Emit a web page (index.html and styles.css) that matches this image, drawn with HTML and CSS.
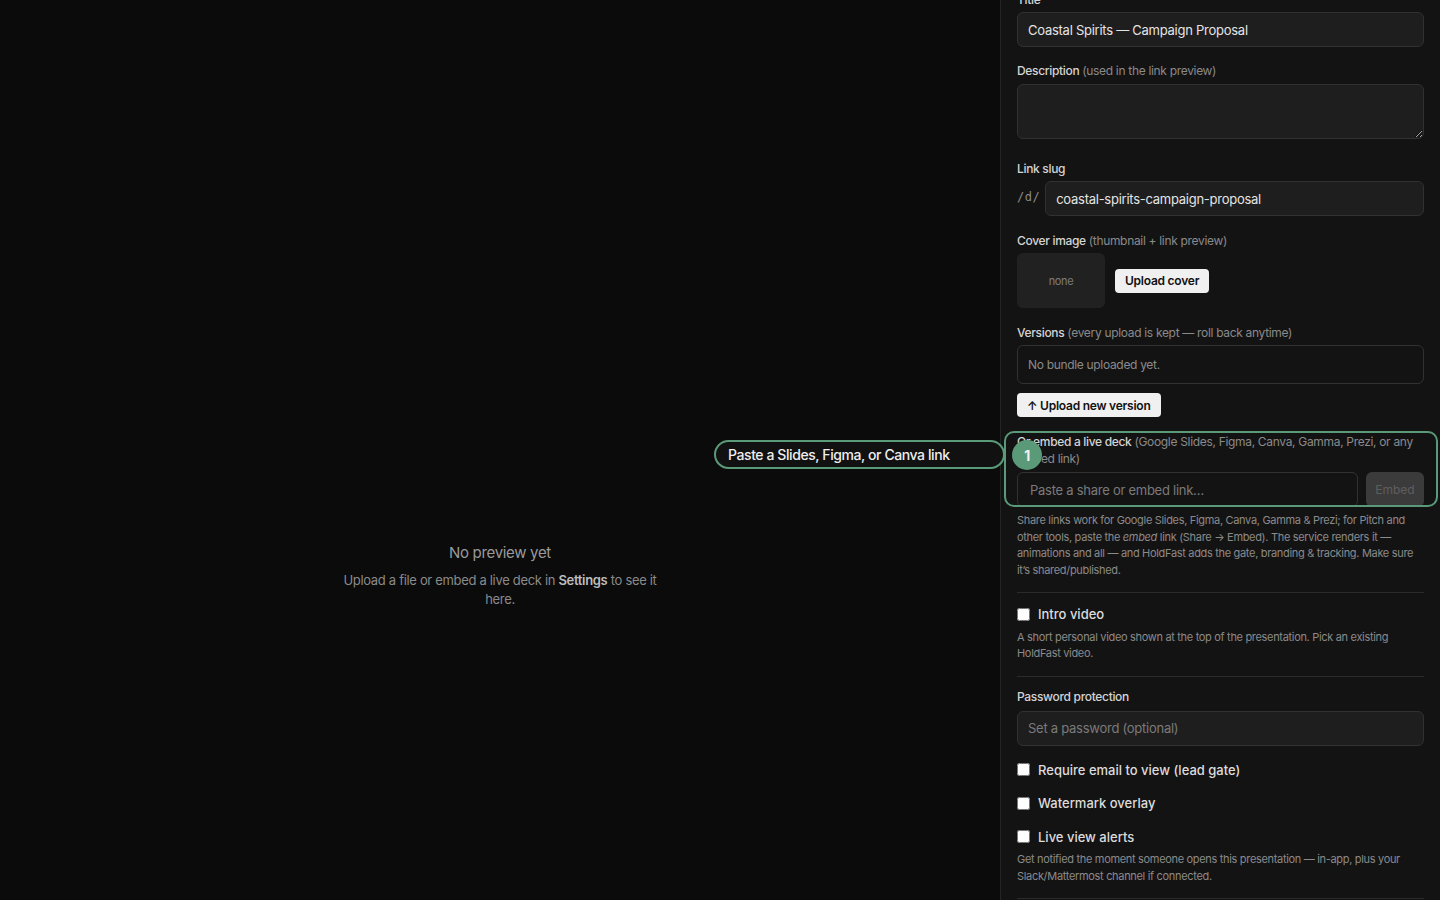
FILE: index.html
```html
<!DOCTYPE html>
<html>
  <head>
    <title>Presentation settings</title>
    <link rel="stylesheet" href="styles.css">
  </head>
  <body>
    <div class="app">
      <div class="preview">
        <div class="empty">
          <p class="empty-title">No preview yet</p>
          <p class="empty-text">Upload a file or embed a live deck in <b>Settings</b> to see it here.</p>
        </div>
      </div>

      <div class="settings js-settings">
        <div class="field">
          <label class="label">Title</label>
          <input class="input" type="text" value="Coastal Spirits — Campaign Proposal">
        </div>

        <div class="field field-wide">
          <label class="label">Description <span class="muted">(used in the link preview)</span></label>
          <textarea class="input textarea"></textarea>
        </div>

        <div class="field field-loose">
          <label class="label">Link slug</label>
          <div class="slug-row">
            <span class="slug-prefix">/d/</span>
            <input class="input" type="text" value="coastal-spirits-campaign-proposal">
          </div>
        </div>

        <div class="field field-loose">
          <label class="label">Cover image <span class="muted">(thumbnail + link preview)</span></label>
          <div class="cover-row">
            <div class="cover-box">none</div>
            <button class="light-button">Upload cover</button>
          </div>
        </div>

        <div class="field">
          <label class="label">Versions <span class="muted">(every upload is kept — roll back anytime)</span></label>
          <div class="versions-box">No bundle uploaded yet.</div>
          <button class="light-button upload-version">↑ Upload new version</button>
        </div>

        <div class="field embed-field">
          <label class="label">Or embed a live deck <span class="muted">(Google Slides, Figma, Canva, Gamma, Prezi, or any embed link)</span></label>
          <div class="embed-row">
            <input class="input embed-input" type="text" placeholder="Paste a share or embed link…">
            <button class="embed-button">Embed</button>
          </div>
          <p class="help">Share links work for Google Slides, Figma, Canva, Gamma &amp; Prezi; for Pitch and other tools, paste the <i>embed</i> link (Share → Embed). The service renders it — animations and all — and HoldFast adds the gate, branding &amp; tracking. Make sure it’s shared/published.</p>
        </div>

        <hr class="divider">

        <label class="check-row"><input type="checkbox"> Intro video</label>
        <p class="help help-tight">A short personal video shown at the top of the presentation. Pick an existing HoldFast video.</p>

        <hr class="divider">

        <div class="field password-field">
          <label class="label">Password protection</label>
          <input class="input" type="text" placeholder="Set a password (optional)">
        </div>

        <label class="check-row"><input type="checkbox"> Require email to view (lead gate)</label>
        <label class="check-row"><input type="checkbox"> Watermark overlay</label>
        <label class="check-row"><input type="checkbox"> Live view alerts</label>
        <p class="help help-tight">Get notified the moment someone opens this presentation — in-app, plus your Slack/Mattermost channel if connected.</p>

        <hr class="divider">

        <label class="check-row"><input type="checkbox"> Allow download</label>
        <div class="spacer"></div>
      </div>
    </div>

    <!-- tour overlay -->
    <div class="tour-highlight"></div>
    <div class="tour-badge">1</div>
    <div class="tour-callout">Paste a Slides, Figma, or Canva link</div>

    <script>
      document.querySelector('.js-settings').scrollTop = 24;
    </script>
  </body>
</html>
```

FILE: styles.css
```css
* {
  box-sizing: border-box;
}

html, body {
  margin: 0;
  height: 100%;
}

body {
  background-color: #0b0b0b;
  color: #e2e2e2;
  font-family: Inter, "Noto Sans", sans-serif;
  letter-spacing: -0.02em;
  overflow: hidden;
}

.app {
  display: flex;
  height: 900px;
}

.preview {
  width: 1000px;
  display: flex;
  justify-content: center;
  padding-top: 543px;
}

.empty {
  width: 330px;
  text-align: center;
}

.empty-title {
  margin: 0 0 9px;
  font-size: 15px;
  color: #9a9a9a;
}

.empty-text {
  margin: 0;
  font-size: 13px;
  line-height: 19px;
  color: #8a8a8a;
}

.empty-text b {
  color: #bdbdbd;
  font-weight: 600;
}

.settings {
  width: 440px;
  height: 900px;
  background-color: #141314;
  border-left: 1px solid #242424;
  padding: 16px 16px 0 16px;
  overflow-y: auto;
  scrollbar-width: none;
}

.field {
  margin-bottom: 16px;
}

.field-wide {
  margin-bottom: 22px;
}

.field-wide .label {
  margin-bottom: 5px;
}

.field-loose {
  margin-bottom: 17px;
}

.label {
  display: block;
  font-size: 12px;
  line-height: 16px;
  font-weight: 500;
  color: #d4d4d4;
  margin-bottom: 4px;
}

.muted {
  font-weight: 400;
  color: #8a8a8a;
}

.input {
  display: block;
  width: 100%;
  height: 35px;
  background-color: #1f1e1f;
  border: 1px solid #323132;
  border-radius: 6px;
  padding: 0 10px;
  font-family: inherit;
  letter-spacing: -0.02em;
  font-size: 13px;
  color: #e4e4e4;
  outline: none;
}

.input::placeholder {
  color: #7a7a7a;
}

.textarea {
  height: 55px;
  resize: vertical;
  padding: 8px 10px;
}

.slug-row {
  display: flex;
  align-items: center;
  gap: 5px;
}

.slug-prefix {
  font-family: "DejaVu Sans Mono", monospace;
  font-size: 12px;
  color: #8a8a8a;
  letter-spacing: 0.5px;
  margin-top: -3px;
}

.cover-row {
  display: flex;
  align-items: center;
  gap: 10px;
}

.cover-box {
  width: 88px;
  height: 55px;
  background-color: #222122;
  border-radius: 6px;
  display: flex;
  align-items: center;
  justify-content: center;
  font-size: 11px;
  color: #7c7c7c;
}

.light-button {
  height: 24px;
  padding: 0 10px;
  background-color: #f0f0f0;
  color: #111;
  border: none;
  border-radius: 4px;
  font-family: inherit;
  letter-spacing: -0.02em;
  font-size: 12px;
  font-weight: 600;
  cursor: pointer;
}

.versions-box {
  height: 39px;
  border: 1px solid #323132;
  border-radius: 6px;
  display: flex;
  align-items: center;
  padding: 0 10px;
  font-size: 12px;
  color: #8a8a8a;
}

.upload-version {
  margin-top: 9px;
}

.embed-field {
  margin-bottom: 0;
}

.embed-field .label {
  line-height: 17px;
  margin-bottom: 5px;
}

.embed-row {
  display: flex;
  gap: 8px;
}

.embed-input {
  flex: 1;
  background-color: transparent;
  padding: 0 12px;
}

.embed-button {
  width: 58px;
  height: 35px;
  background-color: #3b3b3b;
  color: #5e5e5e;
  border: none;
  border-radius: 6px;
  font-family: inherit;
  font-size: 12px;
}

.help {
  margin: 5px 0 0;
  font-size: 11px;
  line-height: 16.5px;
  color: #8a8a8a;
}

.divider {
  border: none;
  border-top: 1px solid #2c2b2c;
  margin: 14px 0 12px;
}

.password-field {
  margin-top: 1px;
  margin-bottom: 15px;
}

.password-field .label {
  margin-bottom: 6px;
}

.check-row {
  display: flex;
  align-items: center;
  gap: 8px;
  height: 18px;
  font-size: 13px;
  font-weight: 500;
  letter-spacing: 0;
  color: #dcdcdc;
  margin-bottom: 15.5px;
}

.check-row + .help-tight {
  margin-top: -10px;
}

.check-row input {
  margin: 0;
  width: 13px;
  height: 13px;
}

.spacer {
  height: 40px;
}

.tour-highlight {
  position: absolute;
  left: 1004px;
  top: 431px;
  width: 434px;
  height: 76px;
  border: 2px solid #5b9a78;
  border-radius: 10px;
  pointer-events: none;
}

.tour-badge {
  position: absolute;
  left: 1012px;
  top: 440px;
  width: 30px;
  height: 30px;
  border-radius: 50%;
  background-color: #5b9a78;
  color: #f2f2f2;
  font-size: 14px;
  font-weight: 700;
  display: flex;
  align-items: center;
  justify-content: center;
}

.tour-callout {
  position: absolute;
  left: 714px;
  top: 440px;
  width: 291px;
  height: 29px;
  border: 2px solid #5b9a78;
  border-radius: 15px;
  background-color: #111;
  color: #eeeeee;
  font-size: 14px;
  font-weight: 500;
  letter-spacing: -0.03em;
  display: flex;
  align-items: center;
  padding-left: 12px;
}
```
